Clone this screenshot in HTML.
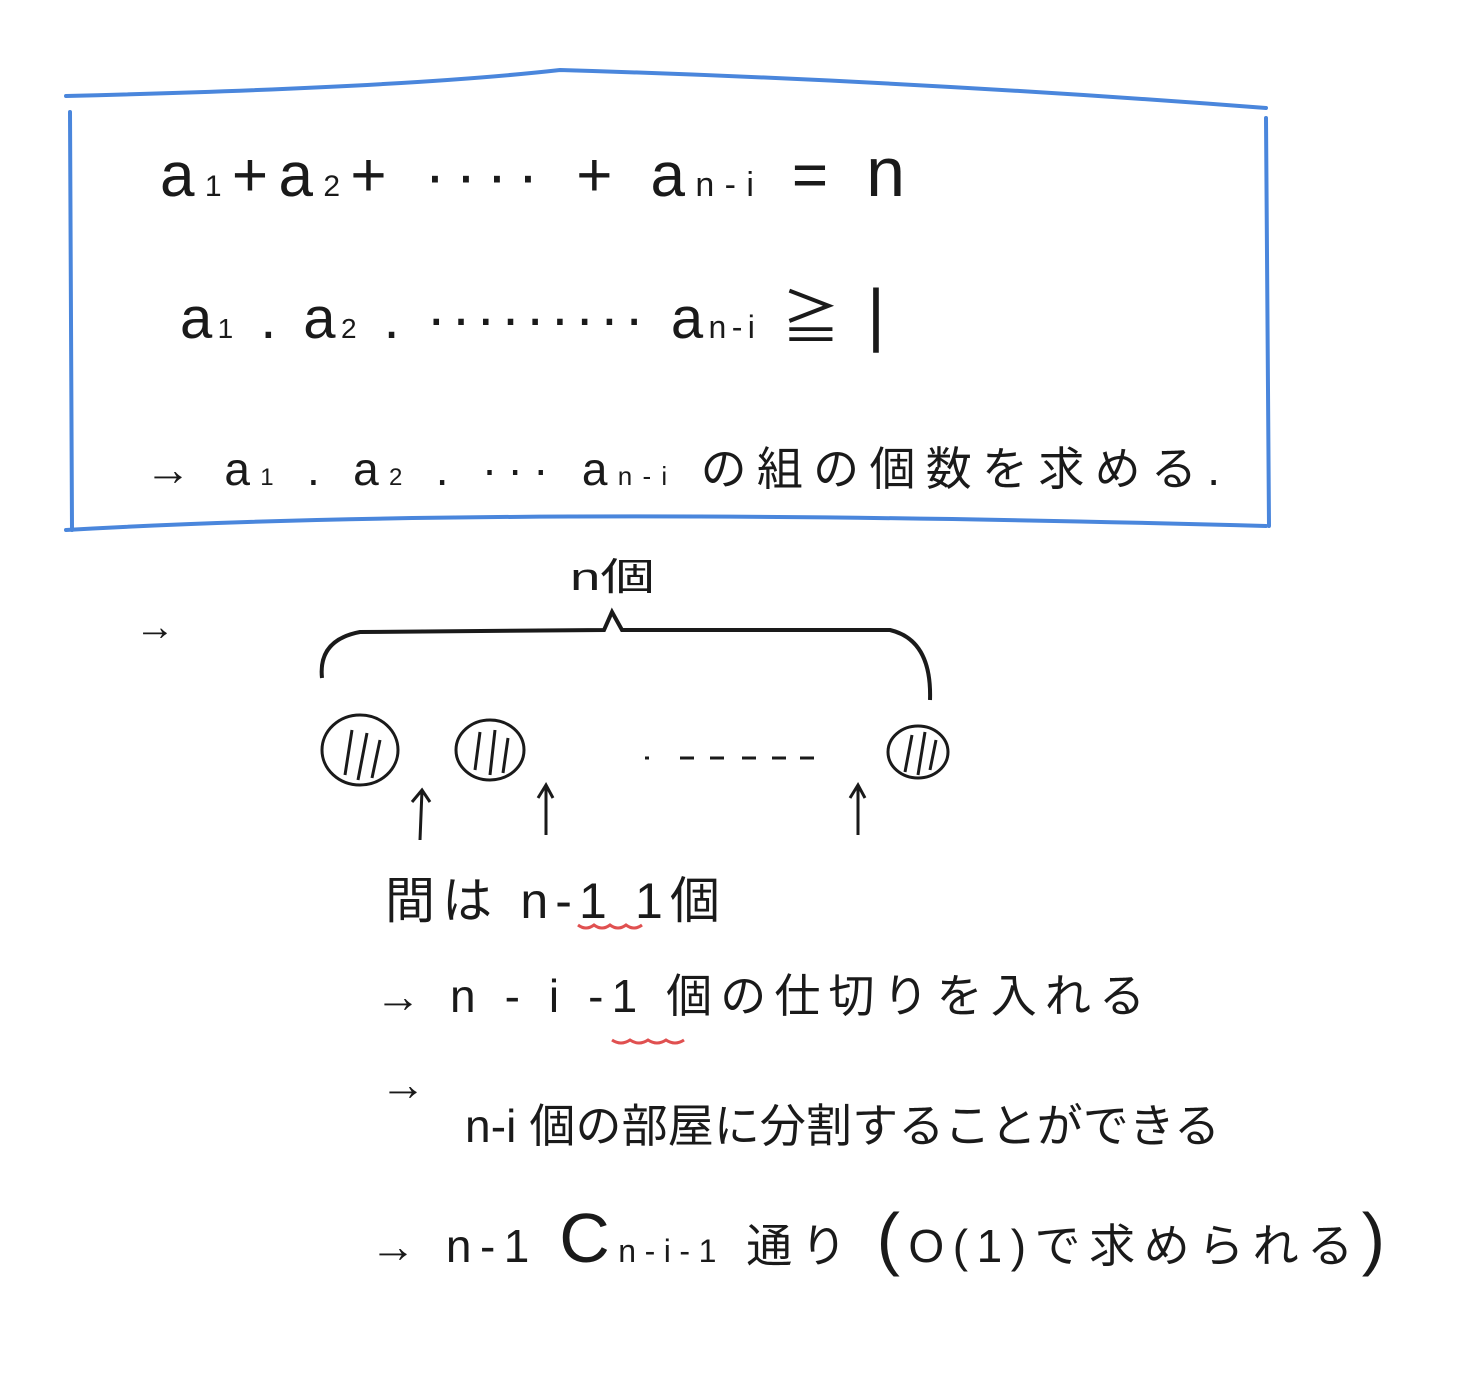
<!DOCTYPE html>
<html><head><meta charset="utf-8"><style>
html,body{margin:0;padding:0;background:#fff;}
svg{display:block}
text{font-family:"Liberation Sans","Noto Sans CJK JP",sans-serif;fill:#1a1a1a;}
</style></head><body>
<svg width="1477" height="1383" viewBox="0 0 1477 1383" xmlns="http://www.w3.org/2000/svg">
<rect width="1477" height="1383" fill="#fff"/>
<g stroke="#4a86dc" stroke-width="4" fill="none" stroke-linecap="round">
<path d="M66 96 Q400 88 560 70 Q900 80 1266 108"/>
<path d="M70 112 L72 530"/>
<path d="M1266 118 L1269 526"/>
<path d="M66 530 Q500 505 1266 526"/>
</g>
<text x="160" y="196" font-size="62" textLength="745" lengthAdjust="spacing">a<tspan font-size="30">1</tspan>+a<tspan font-size="30">2</tspan>+ ···· + a<tspan font-size="34">n-i</tspan> = <tspan font-size="70">n</tspan></text>
<text x="180" y="338" font-size="58" textLength="705" lengthAdjust="spacing">a<tspan font-size="28">1</tspan> . a<tspan font-size="28">2</tspan> . ········· a<tspan font-size="32">n-i</tspan> ≧ <tspan font-size="70">|</tspan></text>
<text x="145" y="485" font-size="46" textLength="1075" lengthAdjust="spacing">→ a<tspan font-size="24">1</tspan> . a<tspan font-size="24">2</tspan> . ··· a<tspan font-size="26">n-i</tspan> の組の個数を求める.</text>
<text x="570" y="590" font-size="38" textLength="85" lengthAdjust="spacingAndGlyphs">n個</text>
<text x="135" y="640" font-size="40">→</text>
<path d="M322 678 Q318 640 360 632 L604 630 L612 612 L622 630 L890 630 Q932 640 930 700" stroke="#1a1a1a" stroke-width="4" fill="none"/>
<g stroke="#1a1a1a" stroke-width="3" fill="none">
<ellipse cx="360" cy="750" rx="38" ry="35"/>
<path d="M345 775 L352 730 M358 780 L367 733 M372 778 L380 740"/>
<ellipse cx="490" cy="750" rx="34" ry="30"/>
<path d="M475 770 L480 732 M490 775 L495 730 M503 773 L508 738"/>
<ellipse cx="918" cy="752" rx="30" ry="26"/>
<path d="M905 772 L912 735 M918 775 L925 732 M930 770 L936 740"/>
<path d="M420 840 L422 790 M412 802 L422 790 L430 802"/>
<path d="M546 835 L546 785 M538 798 L546 785 L553 798"/>
<path d="M858 835 L858 785 M850 798 L858 785 L865 798"/>
<path d="M645 758 h4 M680 758 h14 M710 758 h14 M742 758 h14 M772 758 h14 M800 758 h14" stroke-width="3"/>
</g>
<text x="385" y="918" font-size="50" textLength="335" lengthAdjust="spacing">間は n-1 1個</text>
<path d="M578 925 q8 6 16 0 q8 6 16 0 q8 6 16 0 q8 6 16 0" stroke="#e05050" stroke-width="3" fill="none"/>
<text x="375" y="1012" font-size="46" textLength="770" lengthAdjust="spacing">→ n - i -1 個の仕切りを入れる</text>
<path d="M612 1040 q9 6 18 0 q9 6 18 0 q9 6 18 0 q9 6 18 0" stroke="#e05050" stroke-width="3" fill="none"/>
<text x="380" y="1100" font-size="46">→</text>
<text x="465" y="1142" font-size="46" textLength="755" lengthAdjust="spacing">n-i 個の部屋に分割することができる</text>
<text x="370" y="1262" font-size="46" textLength="1015" lengthAdjust="spacing">→ n-1 <tspan font-size="70">C</tspan><tspan font-size="32">n-i-1</tspan> 通り <tspan font-size="70">(</tspan>O(1)で求められる<tspan font-size="70">)</tspan></text>
</svg>
</body></html>
